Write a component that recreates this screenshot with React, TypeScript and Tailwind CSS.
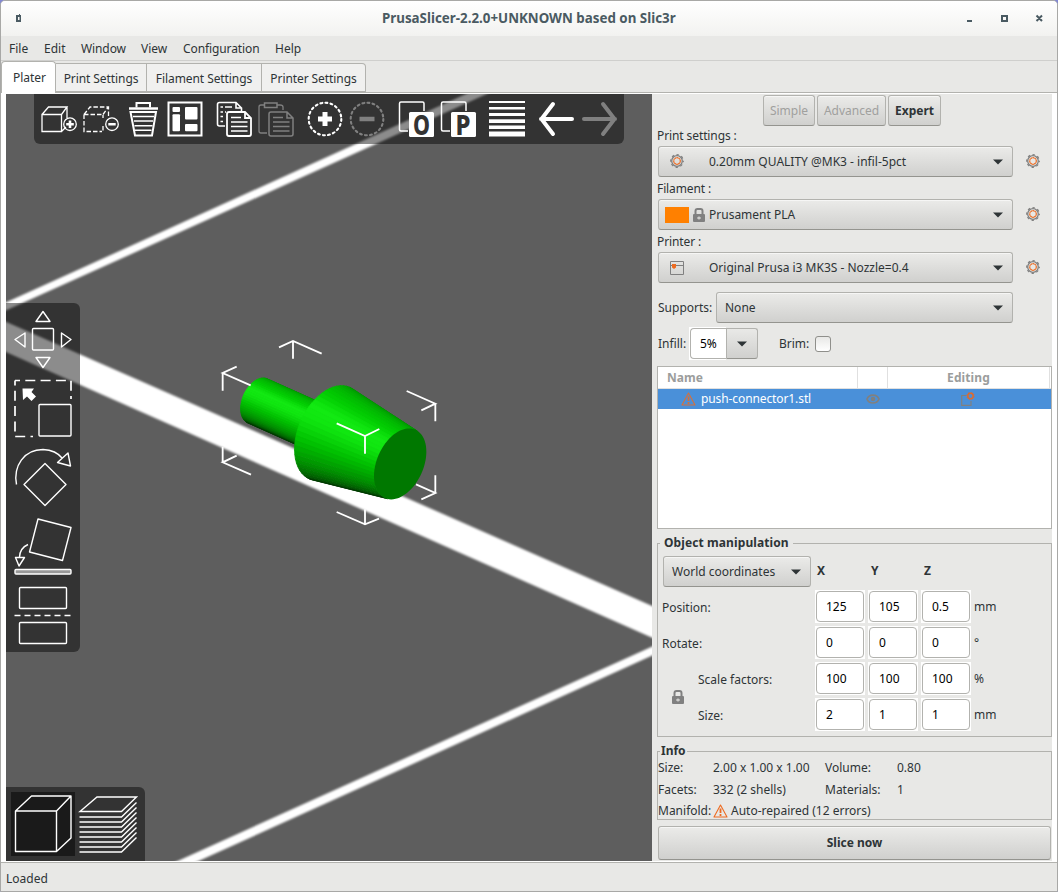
import React from "react";

type Pt = [number, number];

/* ---------- scene geometry ---------- */

const ring = (cx: number, cy: number, w: number, t: number): Pt => [
  cx + w * Math.cos(t),
  cy + w * (-0.466 * Math.cos(t) + 1.274 * Math.sin(t)),
];

const mix = (stops: [number, number[]][], u: number) => {
  for (let i = 1; i < stops.length; i++) {
    if (u <= stops[i][0]) {
      const [a, ca] = stops[i - 1];
      const [b, cb] = stops[i];
      const k = (u - a) / (b - a);
      return `rgb(${ca.map((v, j) => Math.round(v + (cb[j] - v) * k)).join(",")})`;
    }
  }
  return "rgb(0,60,0)";
};

const SHADE: [number, number[]][] = [
  [0, [0, 140, 0]],
  [0.12, [0, 175, 0]],
  [0.28, [2, 208, 2]],
  [0.38, [18, 234, 18]],
  [0.47, [16, 230, 16]],
  [0.62, [0, 190, 0]],
  [0.78, [0, 138, 0]],
  [0.92, [0, 84, 0]],
  [1, [0, 52, 0]],
];

function Loft({ a, b, from, to }: { a: [number, number, number]; b: [number, number, number]; from: number; to: number }) {
  const n = 32;
  const quads = [];
  for (let i = 0; i < n; i++) {
    const t0 = from + ((to - from) * i) / n;
    const t1 = from + ((to - from) * (i + 1)) / n;
    const pts = [ring(...a, t0), ring(...b, t0), ring(...b, t1), ring(...a, t1)];
    const c = mix(SHADE, (i + 0.5) / n);
    quads.push(<polygon key={i} points={pts.map((p) => p.join(",")).join(" ")} fill={c} stroke={c} strokeWidth={2.5} strokeLinejoin="round" />);
  }
  return <>{quads}</>;
}

function outline(cx: number, cy: number, w: number) {
  return Array.from({ length: 72 }, (_, i) => ring(cx, cy, w, (i * Math.PI) / 36).join(",")).join(" ");
}

function Scene() {
  return (
    <svg width="646" height="767" viewBox="6 94 646 767" className="block">
      <defs>
        <filter id="soft" x="-5%" y="-5%" width="110%" height="110%">
          <feGaussianBlur stdDeviation="0.8" />
        </filter>
      </defs>
      <rect x="6" y="94" width="646" height="767" fill="#5e5e5e" />
      <g filter="url(#soft)" fill="#fff">
        <polygon points="-20,310.3 700,627 700,659 -20,340.5" />
        <polygon points="-20,314.2 -20,322.2 520,79 520,69.5" />
        <polygon points="680,634 680,643 150,883 150,873.5" />
      </g>
      <g transform="translate(200 330) scale(0.33333)">
        <Loft a={[172.3, 212.6, 50.5]} b={[388.7, 309.4, 50.5]} from={5.334} to={2.193} />
        <Loft a={[388.7, 309.4, 105]} b={[600.5, 401.7, 78]} from={5.433} to={2.08} />
        <polygon points={outline(600.5, 401.7, 78.5)} fill="#007800" />
      </g>
      <g transform="translate(200 330) scale(0.33333)" fill="none" stroke="#fff" strokeWidth="5.5">
        <path d="M237 52 279 33 365 71M279 33V86" />
        <path d="M110 110 68 129 152 166M68 129V182" />
        <path d="M620 183 706 221 664 241M706 221V274" />
        <path d="M68 350V397M110 377 68 397 153 434" />
        <path d="M410 280 495 318 538 297M495 318V371" />
        <path d="M706 436V489M648 463 706 489 664 508" />
        <path d="M495 538V583M410 546 495 583 537 566" />
      </g>
    </svg>
  );
}

/* ---------- toolbars ---------- */

function Tool({ x, children, dim }: { x: number; children: React.ReactNode; dim?: boolean }) {
  return (
    <svg
      width="42"
      height="49"
      viewBox={`${x} 94 42 49`}
      fill="none"
      stroke={dim ? "#808080" : "#fff"}
      strokeWidth="1.3"
      className="block shrink-0"
    >
      {children}
    </svg>
  );
}

function TopToolbar() {
  return (
    <div className="absolute left-[28px] top-0 flex h-[50px] w-[590px] gap-[7px] rounded-b-md bg-black/45 pl-1">
      <div className="flex">
        <Tool x={38}>
          <path d="M42 114.5H61.5V131.5H42ZM42 114.5 48.5 107H67L61.5 114.5M67 107V118M61.5 131.5 66 127" />
          <circle cx="70" cy="124.2" r="6.3" />
          <path d="M70 120.5V128M66.2 124.2H73.8" strokeWidth="2.6" />
        </Tool>
        <Tool x={80}>
          <path d="M84 114.5H103M84 114.5V131.5H102M84 114.5 90 107H108.5V117M103 114.5 108 107.5M103 115V118M103 126V131" strokeDasharray="4.5 2" />
          <circle cx="112" cy="124.2" r="6.3" />
          <path d="M108.3 124.2H115.7" strokeWidth="2.4" />
        </Tool>
        <Tool x={122}>
          <path d="M129 108.5H158" strokeWidth="2.6" />
          <path d="M136.5 107.5V103H150V107.5" strokeWidth="2" />
          <path d="M130.5 112H156L152 135.5H135Z" strokeWidth="2" />
          <path d="M133 116.5H154M134 121H153M134.5 125.7H152.5M135 130.3H151.5" strokeWidth="1.4" />
        </Tool>
        <Tool x={164}>
          <rect x="168.5" y="102.5" width="33" height="33" strokeWidth="2" />
          <g fill="#fff" stroke="none">
            <rect x="172.500" y="107" width="7.500" height="5" rx="1" />
            <rect x="172.500" y="114.300" width="7.500" height="17" rx="1" />
            <rect x="185" y="107" width="12.500" height="12.500" rx="1" />
            <rect x="185" y="124" width="12.500" height="7.300" rx="1" />
          </g>
        </Tool>
      </div>
      <div className="flex">
        <Tool x={213}>
          <path d="M225 126H219.5Q217.5 126 217.5 124V104.5Q217.5 102.5 219.5 102.5H236L241.5 108V111M236 102.5V108H241.5" strokeWidth="1.6" />
          <path d="M220.5 107H223M225 107H232M220.5 112H223M225 112H226M220.5 116.5H223M220.5 121.5H223" strokeWidth="1.5" />
          <path d="M229 112H245L251 118V134Q251 136 249 136H229Q227 136 227 134V114Q227 112 229 112ZM245 112V118H251" strokeWidth="1.8" />
          <path d="M231 117.5H241M231 122H247.5M231 126.5H247.5M231 131H247.5" strokeWidth="1.6" />
        </Tool>
        <Tool x={255} dim>
          <path d="M267 133H261Q259 133 259 131V107Q259 105 261 105H264.5M277 105H280Q283 105 283 107V110" />
          <path d="M264.5 103H277V107.5H264.5Z" strokeWidth="1.5" />
          <path d="M271 112H287L293 118V134Q293 136 291 136H271Q269 136 269 134V114Q269 112 271 112ZM287 112V118H293" strokeWidth="1.5" />
          <path d="M273 117.5H283M273 122H289.5M273 126.5H289.5M273 131H289.5" strokeWidth="1.3" />
        </Tool>
      </div>
      <div className="flex">
        <Tool x={304}>
          <circle cx="325" cy="119" r="16.3" strokeWidth="2.1" strokeDasharray="1.9 3.22" strokeLinecap="round" />
          <path d="M325 112V126M318 119H332" strokeWidth="5" />
        </Tool>
        <Tool x={346} dim>
          <circle cx="367" cy="119" r="16.3" strokeWidth="2.1" strokeDasharray="1.9 3.22" strokeLinecap="round" />
          <path d="M359.5 119H374.5" strokeWidth="4.6" />
        </Tool>
      </div>
      <div className="flex">
        <Tool x={395}>
          <path d="M408 131H401Q399.500 131 399.500 129.500V103.500Q399.500 102 401 102H422.500Q424 102 424 103.500V111" strokeWidth="1.5" />
          <rect x="409" y="112" width="25" height="25" rx="1.500" fill="#fff" stroke="none" />
          <text x="421.500" y="135.300" fontSize="28.500" fontWeight="800" fontFamily="Noto Sans, sans-serif" textAnchor="middle" textLength="17" lengthAdjust="spacingAndGlyphs" fill="#333" stroke="none">O</text>
        </Tool>
        <Tool x={437}>
          <path d="M450 131H443Q441.500 131 441.500 129.500V103.500Q441.500 102 443 102H464.500Q466 102 466 103.500V111" strokeWidth="1.5" />
          <rect x="451" y="112" width="25" height="25" rx="1.500" fill="#fff" stroke="none" />
          <text x="463" y="134.800" fontSize="28" fontWeight="800" fontFamily="Noto Sans, sans-serif" textAnchor="middle" textLength="15" lengthAdjust="spacingAndGlyphs" fill="#333" stroke="none">P</text>
        </Tool>
      </div>
      <Tool x={486}>
        <g fill="#fff" stroke="none">
          <rect x="489" y="101" width="36" height="2" />
          <rect x="489" y="107" width="36" height="2.500" />
          <rect x="489" y="113" width="36" height="3" />
          <rect x="489" y="119.300" width="36" height="3.700" />
          <rect x="489" y="125.500" width="36" height="3.500" />
          <rect x="489" y="131.500" width="36" height="5" />
        </g>
      </Tool>
      <div className="ml-px flex">
        <Tool x={536}>
          <path d="M572 119H541M553 104 541.500 119 553 134" strokeWidth="4" strokeLinecap="round" strokeLinejoin="round" />
        </Tool>
        <Tool x={578} dim>
          <path d="M584 119H615M603 104 614.500 119 603 134" strokeWidth="4" strokeLinecap="round" strokeLinejoin="round" />
        </Tool>
      </div>
    </div>
  );
}

function LeftToolbar() {
  return (
    <div className="absolute left-0 top-[209px] h-[349px] w-[74px] rounded-r-md bg-black/45">
      <svg width="74" height="349" viewBox="6 303 74 349" fill="none" stroke="#fff" strokeWidth="1.400" className="block">
        <rect x="32.500" y="328.500" width="21" height="21.500" rx="1" />
        <path d="M43 311.500 50 321.500H36ZM43 367.500 50 357.500H36ZM15 339.500 25 333V347ZM71 339.500 61.500 333V347Z" strokeLinejoin="round" />
        <path d="M15 380.500H71V399M15 380.500V436.500H33" strokeWidth="1.700" strokeDasharray="10 5.300" strokeDashoffset="5" />
        <rect x="39" y="404.500" width="32" height="31.500" rx="1" />
        <path d="M22.500 388.500H34L31.500 392 36 396.500 31.500 401 27 396.500 23 400Z" fill="#fff" stroke="none" />
        <path d="M16.500 484.500C13 466 24 449.500 43 449.500Q56 450 62.500 458.500M57.500 462.500 68 453 70.500 466ZM45 463.500 66 484.500 45 505.500 24 484.500Z" strokeLinejoin="round" />
        <path d="M38 519 71 527.500 62.500 560.500 29.500 552ZM28 544.500Q20 548 19.500 557M15.500 557.500H24.500L19 566Z" strokeLinejoin="round" />
        <rect x="15" y="569.500" width="56" height="4.500" rx="1" fill="#999" />
        <rect x="19.500" y="587.500" width="47" height="21" rx="1" />
        <path d="M14.500 615.500H71" strokeWidth="1.700" strokeDasharray="6 4" />
        <rect x="19.500" y="622.500" width="47" height="21" rx="1" />
      </svg>
    </div>
  );
}

function ViewToolbar() {
  return (
    <div className="absolute bottom-0 left-0 h-[74px] w-[139px] rounded-tr-md bg-black/45">
      <svg width="139" height="74" viewBox="6 787 139 74" fill="none" stroke="#fff" strokeWidth="1.400" className="block">
        <rect x="11" y="792" width="64" height="64" fill="#1a1a1a" stroke="none" />
        <path d="M15.500 811H56.500V851.500H15.500ZM15.500 811 31.500 796H71L56.500 811M71 796V838L56.500 851.500" strokeLinejoin="round" />
        <path d="M80 811.500H121.500L136.500 797H97Z" />
        <path d="M79.500 817H121.500L136.500 802.500M79.500 822H121.500L136.500 807.500M79.500 827H121.500L136.500 812.500M79.500 832H121.500L136.500 817.500M79.500 837H121.500L136.500 822.500M79.500 842H121.500L136.500 827.500M79.500 847H121.500L136.500 832.500M79.500 852H121.500L136.500 837.500" />
      </svg>
    </div>
  );
}

/* ---------- small icons ---------- */

function Gear() {
  return (
    <svg width="14" height="14" viewBox="0 0 14 14" fill="none" className="relative top-[-0.5px] block shrink-0">
      <circle cx="7" cy="7" r="5.300" stroke="#808080" strokeWidth="1.300" />
      <circle cx="7" cy="7" r="6.300" stroke="#808080" strokeWidth="1.200" strokeDasharray="2.470 2.478" strokeDashoffset="1.240" />
      <circle cx="7" cy="7" r="3.300" stroke="#ed6b21" strokeWidth="1.200" strokeDasharray="1.800 0.270" />
    </svg>
  );
}

function Lock() {
  return (
    <svg width="12" height="14" viewBox="0 0 12 14" fill="none" className="block shrink-0">
      <path d="M2.500 7V3Q2.500 1 4.500 1H7.500Q9.500 1 9.500 3V7" stroke="#808080" strokeWidth="2" />
      <rect x="0" y="6" width="12" height="8" rx="1" fill="#808080" />
      <path d="M4 10H8M6 8.500V11.500" stroke="#e0e0de" strokeWidth="1.200" />
    </svg>
  );
}

function Warn({ className }: { className?: string }) {
  return (
    <svg width="15" height="14" viewBox="0 0 15 14" fill="none" className={className}>
      <path d="M7.500 1 14 13H1Z" stroke="#ed6b21" strokeWidth="1.100" strokeLinejoin="round" />
      <path d="M7.500 4.500V9M7.500 10V12" stroke="#ed6b21" strokeWidth="1.800" />
    </svg>
  );
}

function Arrow() {
  return (
    <svg width="10" height="6" viewBox="0 0 10 6" className="block shrink-0">
      <path d="M0 0.500H10L5 5.500Z" fill="#2e3436" />
    </svg>
  );
}

/* ---------- widgets ---------- */

function Combo({ className, icon, children }: { className: string; icon?: React.ReactNode; children: React.ReactNode }) {
  return (
    <div
      className={`flex h-[31px] shrink-0 items-center rounded-[3px] border border-[#b2b2ae] border-b-[#94948f] bg-linear-to-b from-[#ebebe9] to-[#d0d0ce] shadow-[inset_0_1px_0_#f6f6f5] ${className}`}
    >
      {icon}
      <span className="flex-1">{children}</span>
      <Arrow />
    </div>
  );
}

function ModeButton({ className, children }: { className: string; children: React.ReactNode }) {
  return (
    <button
      className={`rounded-[3px] border border-[#b2b2ae] border-b-[#94948f] bg-linear-to-b from-[#ebebe9] to-[#d0d0ce] shadow-[inset_0_1px_0_#f6f6f5] ${className}`}
    >
      {children}
    </button>
  );
}

function Entry({ children }: { children: React.ReactNode }) {
  return (
    <div className="bg-white p-px">
      <div className="flex h-[31px] w-[48px] items-center rounded-[4px] border border-[#b2b2ae] bg-white pl-[9px] pt-px text-black">
        {children}
      </div>
    </div>
  );
}

function Preset({ label, value, icon }: { label: string; value: string; icon: React.ReactNode }) {
  return (
    <div className="h-[53px] pl-[5px]">
      <div className="h-[20px] leading-[20px] tracking-[-0.1px]">{label}</div>
      <div className="flex items-center pl-px">
        <Combo className="w-[355px] pr-[9px]" icon={<div className="flex w-[50px] shrink-0 items-center pl-[6px]">{icon}</div>}>
          {value}
        </Combo>
        <div className="ml-[13px]">
          <Gear />
        </div>
      </div>
    </div>
  );
}

function CoordRow({ label, indent, values, unit }: { label: string; indent?: boolean; values: string[]; unit: string }) {
  return (
    <div className="flex h-[36px] items-center">
      <span className={indent ? "w-[117px] pt-[3px]" : "w-[153px] pt-[3px]"}>{label}</span>
      <div className="flex gap-[3px]">
        {values.map((v, i) => (
          <Entry key={i}>{v}</Entry>
        ))}
      </div>
      <span className="ml-[3px] pt-[2px]">{unit}</span>
    </div>
  );
}

function SidePanel() {
  return (
    <div className="w-[400px] shrink-0 bg-[#e8e8e6]">
      <div className="flex h-[33px] gap-[2px] pl-[111px] pt-px">
        <ModeButton className="h-[31px] w-[52px] text-[#a0a09e]">Simple</ModeButton>
        <ModeButton className="h-[31px] w-[69px] text-[#a0a09e]">Advanced</ModeButton>
        <ModeButton className="h-[31px] w-[53px] font-bold">Expert</ModeButton>
      </div>
      <div className="-mt-px">
        <Preset label="Print settings :" value="0.20mm QUALITY @MK3 - infil-5pct" icon={<div className="pl-[5px]"><Gear /></div>} />
        <Preset
          label="Filament :"
          value="Prusament PLA"
          icon={
            <>
              <div className="mr-[4px] h-[16px] w-[24px] bg-[#ff8000]" />
              <Lock />
            </>
          }
        />
        <Preset
          label="Printer :"
          value="Original Prusa i3 MK3S - Nozzle=0.4"
          icon={
            <svg width="14" height="14" viewBox="0 0 14 14" className="ml-[5px]" fill="none">
              <path d="M0.500 0.500H13.500V13.500H0.500ZM0.500 4.500H13.500" stroke="#808080" />
              <path d="M2 3H6V6.500L4 8 2 6.500Z" fill="#ed6b21" />
            </svg>
          }
        />
      </div>
      <div className="mt-[7px] flex items-center pl-[6px]">
        <span className="w-[58px]">Supports:</span>
        <Combo className="w-[297px] pl-[8px] pr-[9px]">None</Combo>
      </div>
      <div className="mt-[4px] flex h-[33px] items-center pl-[6px]">
        <span className="w-[31px]">Infill:</span>
        <div className="bg-white p-px pr-0">
          <div className="flex h-[31px] w-[36px] items-center rounded-l-[4px] border border-r-0 border-[#b2b2ae] pl-[9px] text-black">5%</div>
        </div>
        <div className="flex h-[31px] w-[32px] items-center justify-center rounded-r-[3px] border border-[#b2b2ae] border-b-[#94948f] bg-linear-to-b from-[#e9e9e7] to-[#d0d0ce]">
          <Arrow />
        </div>
        <span className="ml-[21px] w-[36px]">Brim:</span>
        <div className="h-[16px] w-[16px] rounded-[3px] border border-[#8f8f8b] bg-linear-to-b from-[#e8e8e6] to-white" />
      </div>

      <div className="ml-[5px] mt-[6px] h-[163px] w-[395px] border border-[#b2b2ae] bg-white">
        <div className="flex h-[22px] items-center border-b border-[#e0e0e0] font-bold text-[#9b9d9c]">
          <div className="h-full w-[200px] border-r border-[#e0e0e0] pl-[9px] leading-[21px]">Name</div>
          <div className="h-full w-[30px] border-r border-[#e0e0e0]" />
          <div className="h-full w-[162px] border-r border-[#e0e0e0] text-center leading-[21px] tracking-[0.1px]">Editing</div>
        </div>
        <div className="flex h-[20px] items-center bg-[#4a90d9] text-white">
          <Warn className="ml-[23px] mr-[5px] shrink-0 opacity-85" />
          <span className="w-[165px] shrink-0 leading-[18px] tracking-[-0.1px]">push-connector1.stl</span>
          <svg width="14" height="10" viewBox="0 0 14 10" fill="none" className="shrink-0">
            <path d="M1 5C3 -0.300 11 -0.300 13 5C11 10.300 3 10.300 1 5Z" stroke="#808080" strokeWidth="1.700" />
            <circle cx="7" cy="5" r="2.300" fill="#808080" />
          </svg>
          <svg width="14" height="14" viewBox="0 0 14 14" fill="none" className="ml-[81px] shrink-0">
            <path d="M5.500 3.500H0.700V13.300H10V9" stroke="#808080" strokeWidth="1.200" />
            <circle cx="9.500" cy="4" r="2.700" stroke="#e06a2c" strokeWidth="1.500" />
            <circle cx="9.500" cy="4" r="3.700" stroke="#e06a2c" strokeWidth="0.700" strokeDasharray="1.450 1.456" />
          </svg>
        </div>
      </div>

      <div className="relative ml-[5px] mt-[14px] h-[194px] w-[395px] border border-[#b2b2ae] pl-[4px] pt-[12px]">
        <div className="absolute left-[2px] top-[-10px] bg-[#e8e8e6] px-[4px] font-bold leading-[18px] tracking-[0.1px]">Object manipulation</div>
        <div className="flex pl-px">
          <Combo className="w-[148px] pl-[8px] pr-[9px]">World coordinates</Combo>
          <div className="flex pl-[6px] font-bold leading-[30px]">
            <span className="w-[54px]">X</span>
            <span className="w-[53px]">Y</span>
            <span>Z</span>
          </div>
        </div>
        <div className="mt-px">
          <CoordRow label="Position:" values={["125", "105", "0.5"]} unit="mm" />
          <CoordRow label="Rotate:" values={["0", "0", "0"]} unit="°" />
          <div className="flex items-center">
            <div className="w-[36px] pl-[10px] pt-[2px]">
              <Lock />
            </div>
            <div>
              <CoordRow indent label="Scale factors:" values={["100", "100", "100"]} unit="%" />
              <CoordRow indent label="Size:" values={["2", "1", "1"]} unit="mm" />
            </div>
          </div>
        </div>
      </div>

      <div className="relative ml-[5px] mt-[14px] h-[69px] w-[395px] border border-[#b2b2ae] pt-[5px]">
        <div className="absolute left-[2px] top-[-10px] bg-[#e8e8e6] px-px font-bold leading-[18px]">Info</div>
        <div className="grid grid-cols-[55px_112px_72px_1fr] leading-[22px]">
          <span>Size:</span>
          <span>2.00 x 1.00 x 1.00</span>
          <span>Volume:</span>
          <span>0.80</span>
          <span>Facets:</span>
          <span>332 (2 shells)</span>
          <span>Materials:</span>
          <span>1</span>
        </div>
        <div className="flex h-[19px] items-center leading-[19px]">
          <span className="w-[55px]">Manifold:</span>
          <Warn className="mr-[3px]" />
          <span>Auto-repaired (12 errors)</span>
        </div>
      </div>

      <ModeButton className="ml-[6px] mt-[6px] block h-[34px] w-[393px] font-bold">Slice now</ModeButton>
    </div>
  );
}

function Tab({ className, children }: { className: string; children: React.ReactNode }) {
  return (
    <div className={`mt-[2px] h-[29px] border border-l-0 border-[#b2b2ae] bg-[#f0f0ef] text-center leading-[29px] ${className}`}>
      {children}
    </div>
  );
}

export default function App() {
  return (
    <div className="h-[892px] w-[1058px] bg-[#8288d2]">
      <div className="flex h-full w-full flex-col overflow-hidden rounded-t-[5px] border border-[#a8a8a6] bg-[#e8e8e6] font-['Noto_Sans',sans-serif] text-[12px] leading-[16px] text-[#2e3436]">
        <header className="flex h-[35px] shrink-0 items-center bg-linear-to-b from-white to-[#f2f2f0] pb-px">
          <svg width="5" height="8" viewBox="0 0 5 8" className="ml-[15px] shrink-0">
            <path d="M0 1H3V0H4V1H5V8H0ZM2 3V6H3.500V3Z" fill="#4a5a62" fillRule="evenodd" />
          </svg>
          <h1 className="ml-[361px] w-[294px] whitespace-nowrap text-[13.35px] font-bold text-[#4a5a62]">PrusaSlicer-2.2.0+UNKNOWN based on Slic3r</h1>
          <svg width="76" height="8" viewBox="967 14 76 8" className="ml-[291px] shrink-0" fill="none" stroke="#4a5a62" strokeWidth="2">
            <path d="M967 21H972M1002 16H1007V21H1002ZM1036.500 15.500 1042 21M1042 15.500 1036.500 21" />
          </svg>
        </header>
        <nav className="flex h-[25px] shrink-0 items-center border-b border-[#cfcfcd] pl-[8px] pt-[2px]">
          <span className="w-[35px]">File</span>
          <span className="w-[37px]">Edit</span>
          <span className="w-[60px] tracking-[-0.1px]">Window</span>
          <span className="w-[42px]">View</span>
          <span className="w-[92px] tracking-[-0.1px]">Configuration</span>
          <span>Help</span>
        </nav>
        <div className="flex h-[31px] shrink-0">
          <div className="z-10 h-[32px] w-[55px] rounded-t-[4px] border border-b-0 border-[#b2b2ae] bg-white pl-[2px] text-center leading-[32px]">Plater</div>
          <Tab className="w-[91px] tracking-[-0.08px]">Print Settings</Tab>
          <Tab className="w-[115px] tracking-[-0.08px]">Filament Settings</Tab>
          <Tab className="w-[104px] rounded-tr-[4px] tracking-[-0.08px]">Printer Settings</Tab>
        </div>
        <main className="flex h-[771px] shrink-0 border-y border-[#b2b2ae] bg-white pb-px pl-[5px] pt-px">
          <div className="relative w-[646px] shrink-0 overflow-hidden">
            <Scene />
            <TopToolbar />
            <LeftToolbar />
            <ViewToolbar />
          </div>
          <SidePanel />
        </main>
        <footer className="flex flex-1 items-center pl-[5px] pt-[3px]">Loaded</footer>
      </div>
    </div>
  );
}
